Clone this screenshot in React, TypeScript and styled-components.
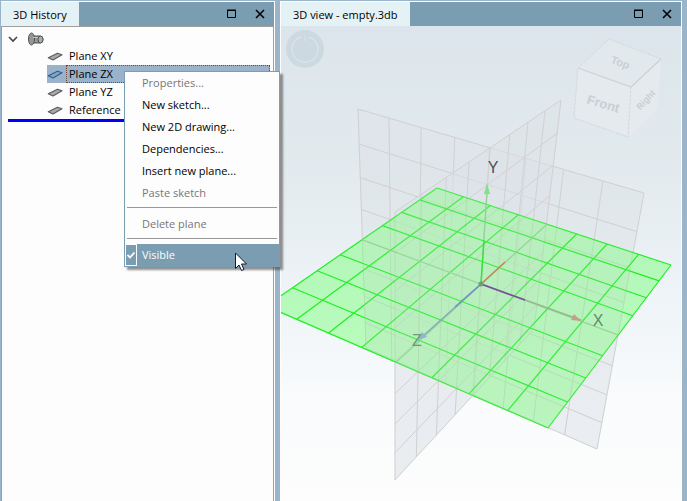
import React from "react";
import styled, { createGlobalStyle, css } from "styled-components";

const GlobalStyle = createGlobalStyle`
  * { box-sizing: border-box; }
  body {
    margin: 0;
    background: #9ab4ca;
    color: #000;
    font: 11px/18px "Open Sans", "Noto Sans", sans-serif;
  }
  button { font: inherit; color: inherit; }
`;

const Workspace = styled.main`
  display: grid;
  grid-template-columns: 274px minmax(0, 1fr);
  gap: 5px;
  min-height: 100vh;
  padding: 1px 5px 0 1px;
`;

const Panel = styled.section`
  position: relative;
  display: flex;
  flex-direction: column;
  min-width: 0;
  border: solid #fdfdfd;
  border-width: 1px 1px 0 0;
`;

const ViewPanel = styled(Panel)`
  border-left-width: 1px;
`;

const TitleBar = styled.header`
  display: flex;
  height: 24px;
  background: #7b9db2;
`;

const Tab = styled.h2`
  margin: 0 auto 0 0;
  padding: 0 12px;
  background: #e4f1f5;
  font-size: 11px;
  font-weight: 400;
  line-height: 25px;
  white-space: nowrap;
`;

const WindowButton = styled.button`
  display: grid;
  place-items: center;
  width: 28px;
  padding: 0;
  border: 0;
  background: none;
`;

const TreeArea = styled.div`
  flex: 1;
  padding: 3px 3px 0 6px;
  border: solid #a0a0a0;
  border-width: 1px 1px 0;
  background: #fdfdfd;
`;

const RootRow = styled.button`
  display: flex;
  align-items: center;
  gap: 8px;
  height: 17px;
  padding: 0;
  border: 0;
  background: none;
`;

const PlaneList = styled.ul`
  margin: 0;
  padding: 0 0 0 39px;
  border-bottom: 3px solid #0000fa;
  list-style: none;
`;

const PlaneRow = styled.button<{ $selected: boolean }>`
  display: flex;
  align-items: center;
  width: 100%;
  height: 18px;
  padding: 0;
  border: 0;
  background: ${(p) => (p.$selected ? "#9ab3ca" : "none")};
  text-align: left;
`;

const PlaneName = styled.span<{ $selected: boolean }>`
  flex: 1;
  margin-left: 3px;
  padding-left: 2px;
  border: 1px dotted ${(p) => (p.$selected ? "#6b4a3c" : "transparent")};
  line-height: 16px;
`;

const Menu = styled.div`
  position: absolute;
  z-index: 2;
  top: 69px;
  left: 123px;
  width: 156px;
  border: 1px solid #7b9db2;
  background: #fdfdfd;
  box-shadow: 3px 3px 2px rgba(70, 70, 70, 0.6);
`;

const menuEntry = css`
  display: block;
  width: 100%;
  height: 22px;
  padding: 0 0 0 17px;
  border: 0;
  background: none;
  line-height: 22px;
  text-align: left;
`;

const MenuItem = styled.button`
  ${menuEntry}
  &:disabled { color: #777; }
`;

const Divider = styled.hr`
  height: 1px;
  margin: 3px 2px 5px;
  border: 0;
  background: #999;
`;

const CheckItem = styled.label`
  ${menuEntry}
  display: grid;
  grid-template-columns: 12px 1fr;
  gap: 5px;
  padding: 0;
  background: #7b9db2;
  color: #fdfdfd;
`;

const CheckBox = styled.input`
  grid-area: 1 / 1;
  width: 12px;
  height: 22px;
  margin: 0;
  border: 1px solid #fdfdfd;
  appearance: none;
`;

const CheckMark = styled.svg`
  grid-area: 1 / 1;
  place-self: center;
  pointer-events: none;
`;

const Pointer = styled.svg`
  position: absolute;
  top: 180px;
  left: 110px;
`;

const Viewport = styled.div`
  position: relative;
  display: flex;
  flex: 1;
  background: linear-gradient(#dce5eb, #e2eaee 30%, #edf3f7 55%, #f9fbfc 78%, #fdfdfd);
`;

const Scene = styled.svg`
  flex: 1;
  width: 100%;
  min-width: 0;
  min-height: 0;
  font-family: "Liberation Sans", sans-serif;
`;

const OrbitButton = styled.button`
  position: absolute;
  top: 4px;
  left: 5px;
  width: 38px;
  height: 38px;
  padding: 0;
  border: 0;
  border-radius: 50%;
  background: #ccd9e0;
`;

type Point = [number, number];
type Quad = [Point, Point, Point, Point];

/* Maps the unit square onto a quad in perspective. */
function project(q: Quad, u: number, v: number): Point {
  const [[x0, y0], [x1, y1], [x2, y2], [x3, y3]] = q;
  const dx1 = x1 - x2, dx2 = x3 - x2, sx = x0 - x1 + x2 - x3;
  const dy1 = y1 - y2, dy2 = y3 - y2, sy = y0 - y1 + y2 - y3;
  const det = dx1 * dy2 - dx2 * dy1;
  const g = (sx * dy2 - dx2 * sy) / det;
  const h = (dx1 * sy - sx * dy1) / det;
  const w = g * u + h * v + 1;
  return [
    ((x1 - x0 + g * x1) * u + (x3 - x0 + h * x3) * v + x0) / w,
    ((y1 - y0 + g * y1) * u + (y3 - y0 + h * y3) * v + y0) / w,
  ];
}

const ground: Quad = [[437, 188], [671, 265], [548, 428], [266, 306]];
const planeXY: Quad = [[358, 109], [644, 193], [597, 449], [366, 348]];
const planeYZ: Quad = [[395, 212], [561, 100], [534, 329], [395, 480]];
const steps = [0, 1, 2, 3, 4, 5, 6, 7, 8];

function PlaneGrid({ quad, fill, stroke, axis = stroke, width = 1 }: {
  quad: Quad; fill: string; stroke: string; axis?: string; width?: number;
}) {
  const line = (a: Point, b: Point) => `M${a.join(" ")}L${b.join(" ")}`;
  return (
    <g strokeWidth={width}>
      <polygon points={quad.map((p) => p.join(",")).join(" ")} fill={fill} />
      {steps.map((i) => (
        <path
          key={i}
          stroke={i === 4 ? axis : stroke}
          d={line(project(quad, i / 8, 0), project(quad, i / 8, 1)) +
            line(project(quad, 0, i / 8), project(quad, 1, i / 8))}
        />
      ))}
    </g>
  );
}

function NavigationCube() {
  return (
    <g>
      <path d="M609 39 661 59 658 110 628 137 574 118 578 68Z" fill="#e4eaee" />
      <path d="M578 68 609 39 661 59 631 87Z" fill="#e2e9ed" />
      <path d="M578 68 631 87 661 59" fill="none" stroke="#cbd1d5" strokeWidth="1.3" />
      <path d="M578 68 609 39 661 59M631 87 628 137 574 118 578 68" fill="none" stroke="#d3d9dd" strokeDasharray="3 1" />
      <g fill="#c9cfd3" fontSize="13" fontWeight="700" textAnchor="middle">
        <text transform="translate(602 108) rotate(17)">Front</text>
        <text transform="translate(648 102) rotate(-47)" fontSize="9">Right</text>
        <text transform="translate(619 66) rotate(20)" fontSize="11">Top</text>
      </g>
    </g>
  );
}

function SceneDrawing() {
  return (
    <Scene width="400" height="475" viewBox="281 26 400 475" preserveAspectRatio="xMidYMid slice" role="img" aria-label="Three reference planes with X, Y and Z axes">
      <NavigationCube />
      <PlaneGrid quad={planeXY} fill="rgba(222,227,233,.5)" stroke="#d8d6d7" />
      <PlaneGrid quad={planeYZ} fill="rgba(222,227,233,.5)" stroke="#d8d6d7" />
      <PlaneGrid quad={ground} fill="rgba(130,255,130,.52)" stroke="#1df021" axis="#7fd886" width={1.2} />
      <g opacity=".3">
        <PlaneGrid quad={planeXY} fill="rgba(222,224,228,.4)" stroke="#c4c6c5" />
        <PlaneGrid quad={planeYZ} fill="rgba(222,224,228,.5)" stroke="#c4c6c5" />
      </g>
      <g fill="none" strokeWidth="1.4">
        <path d="M481 284 487 192" stroke="#8fd695" />
        <path d="M481 284 484 240" stroke="#36e23d" />
        <path d="M481 284 505 262" stroke="#ce8050" />
        <path d="M481 284 581 320" stroke="#98b98c" />
        <path d="M481 284 525 300" stroke="#7552a0" strokeWidth="1.6" />
        <path d="M481 284 423 336" stroke="#87a9bd" />
        <path d="M481 284 455 307" stroke="#7190c4" />
      </g>
      <path d="M487 183 490 194H484Z" fill="#83df88" />
      <path d="M581 321 571 320 574 314Z" fill="#c2a08a" />
      <path d="M417 340 422 332 427 337Z" fill="#91b6c8" />
      <circle cx="481" cy="284" r="2.5" fill="#719b78" />
      <g fontSize="16" textAnchor="middle">
        <text x="493" y="173" fill="#4c5054">Y</text>
        <text x="598" y="326" fill="#628b66">X</text>
        <text x="417" y="346" fill="#719779">Z</text>
      </g>
    </Scene>
  );
}

function WindowControls() {
  return (
    <>
      <WindowButton type="button" aria-label="Maximize">
        <svg width="10" height="10" fill="none" stroke="#000"><path d="M.5 1.5h8v7h-8zM0 1h9" /></svg>
      </WindowButton>
      <WindowButton type="button" aria-label="Close">
        <svg width="10" height="10" fill="none" stroke="#000" strokeWidth="1.6"><path d="m1 1 8 8M9 1 1 9" /></svg>
      </WindowButton>
    </>
  );
}

function PlaneIcon({ selected }: { selected: boolean }) {
  return (
    <svg width="16" height="16" strokeLinejoin="round" fill={selected ? "#83a6c3" : "#a9a9a9"} stroke={selected ? "#315f8e" : "#5c5c5c"} strokeWidth="1.2">
      <path d="M1.3 9.800 10.500 5.200 15 6.700 6 12Z" />
    </svg>
  );
}

const planes = ["Plane XY", "Plane ZX", "Plane YZ", "Reference"];

const commands = [
  { label: "Properties...", disabled: true },
  { label: "New sketch..." },
  { label: "New 2D drawing..." },
  { label: "Dependencies..." },
  { label: "Insert new plane..." },
  { label: "Paste sketch", disabled: true },
];

function ContextMenu() {
  return (
    <Menu aria-label="Plane commands">
      {commands.map((c) => (
        <MenuItem key={c.label} type="button" disabled={c.disabled}>{c.label}</MenuItem>
      ))}
      <Divider />
      <MenuItem type="button" disabled>Delete plane</MenuItem>
      <Divider />
      <CheckItem>
        <CheckBox type="checkbox" defaultChecked />
        <CheckMark width="8" height="8" fill="none" stroke="#fff" strokeWidth="1.8"><path d="m.5 4 2.5 2.5L7.5 1.5" /></CheckMark>
        <span>Visible</span>
      </CheckItem>
      <Pointer width="13" height="20" aria-hidden="true">
        <path d="M.5 1v15.5L4 13l2.5 5.500 2.500-1L6.500 12h5Z" fill="#fff" stroke="#161a2e" />
      </Pointer>
    </Menu>
  );
}

export default function App() {
  return (
    <>
      <GlobalStyle />
      <Workspace>
        <Panel>
          <TitleBar>
            <Tab>3D History</Tab>
            <WindowControls />
          </TitleBar>
          <TreeArea>
            <RootRow type="button" aria-label="Model" aria-expanded="true">
              <svg width="12" height="12" fill="none" stroke="#444" strokeWidth="1.6"><path d="m1 4 4 4 4-4" /></svg>
              <svg width="16" height="14" fill="#949797" stroke="#4e5151">
                <path d="M5 4h7q3 0 3 3.500t-3 3.500H5Z" />
                <ellipse cx="12.5" cy="7.5" rx="2.5" ry="3.5" fill="#aaadad" />
                <ellipse cx="3.5" cy="7" rx="3" ry="6" />
                <path d="M5 5.500h5" stroke="#c4c8c8" />
              </svg>
            </RootRow>
            <PlaneList>
              {planes.map((name) => {
                const selected = name === "Plane ZX";
                return (
                  <li key={name}>
                    <PlaneRow type="button" $selected={selected} aria-pressed={selected}>
                      <PlaneIcon selected={selected} />
                      <PlaneName $selected={selected}>{name}</PlaneName>
                    </PlaneRow>
                  </li>
                );
              })}
            </PlaneList>
          </TreeArea>
          <ContextMenu />
        </Panel>
        <ViewPanel>
          <TitleBar>
            <Tab>3D view - empty.3db</Tab>
            <WindowControls />
          </TitleBar>
          <Viewport>
            <SceneDrawing />
            <OrbitButton type="button" aria-label="Orbit">
              <svg width="38" height="38" fill="none" stroke="#d8e2e7" strokeWidth="1.5"><path d="M19 6v5M15 7a13 13 0 1 0 8 0" /></svg>
            </OrbitButton>
          </Viewport>
        </ViewPanel>
      </Workspace>
    </>
  );
}
